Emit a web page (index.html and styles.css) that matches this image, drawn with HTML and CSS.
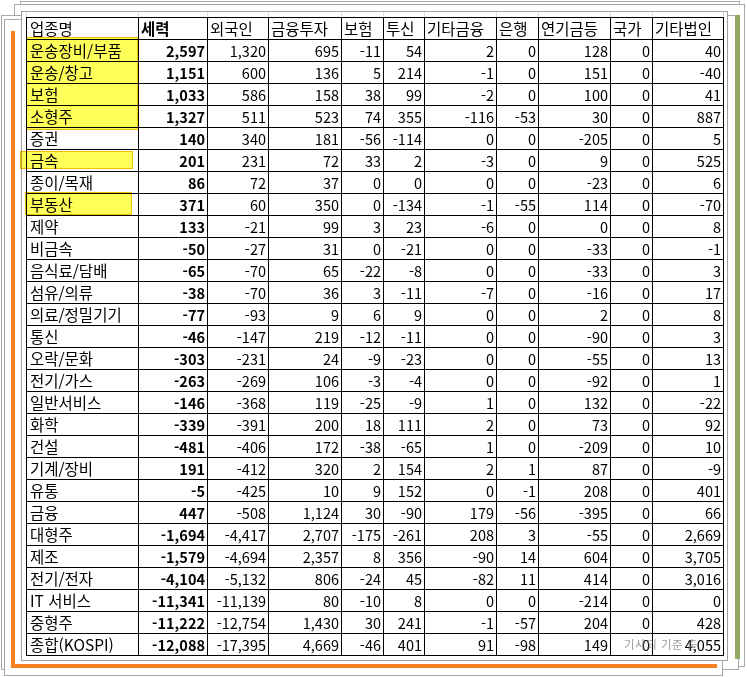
FILE: index.html
```html
<!DOCTYPE html>
<html lang="ko">
<head>
<meta charset="utf-8">
<title>업종별 수급</title>
<link rel="stylesheet" href="styles.css">
</head>
<body>
<div class="stage">
  <div class="sheet sheet-a"></div>
  <div class="sheet sheet-b"></div>
  <div class="sheet sheet-c"></div>
  <div class="sheet sheet-d"></div>
  <div class="sheet sheet-orange"></div>
  <div class="green-strip"></div>

  <div class="window">
    <table class="grid">
      <colgroup>
        <col class="c-name"><col class="c-power"><col class="c-foreign"><col class="c-invest"><col class="c-ins"><col class="c-trust"><col class="c-etcfin"><col class="c-bank"><col class="c-pension"><col class="c-nation"><col class="c-etccorp">
      </colgroup>
      <tr class="gap"><td></td><td></td><td></td><td></td><td></td><td></td><td></td><td></td><td></td><td></td><td></td></tr>
      <tr class="head"><td>업종명</td><td class="b">세력</td><td>외국인</td><td>금융투자</td><td>보험</td><td>투신</td><td>기타금융</td><td>은행</td><td>연기금등</td><td>국가</td><td>기타법인</td></tr>
      <tr><td>운송장비/부품</td><td class="b">2,597</td><td>1,320</td><td>695</td><td>-11</td><td>54</td><td>2</td><td>0</td><td>128</td><td>0</td><td>40</td></tr>
      <tr><td>운송/창고</td><td class="b">1,151</td><td>600</td><td>136</td><td>5</td><td>214</td><td>-1</td><td>0</td><td>151</td><td>0</td><td>-40</td></tr>
      <tr><td>보험</td><td class="b">1,033</td><td>586</td><td>158</td><td>38</td><td>99</td><td>-2</td><td>0</td><td>100</td><td>0</td><td>41</td></tr>
      <tr><td>소형주</td><td class="b">1,327</td><td>511</td><td>523</td><td>74</td><td>355</td><td>-116</td><td>-53</td><td>30</td><td>0</td><td>887</td></tr>
      <tr><td>증권</td><td class="b">140</td><td>340</td><td>181</td><td>-56</td><td>-114</td><td>0</td><td>0</td><td>-205</td><td>0</td><td>5</td></tr>
      <tr><td>금속</td><td class="b">201</td><td>231</td><td>72</td><td>33</td><td>2</td><td>-3</td><td>0</td><td>9</td><td>0</td><td>525</td></tr>
      <tr><td>종이/목재</td><td class="b">86</td><td>72</td><td>37</td><td>0</td><td>0</td><td>0</td><td>0</td><td>-23</td><td>0</td><td>6</td></tr>
      <tr><td>부동산</td><td class="b">371</td><td>60</td><td>350</td><td>0</td><td>-134</td><td>-1</td><td>-55</td><td>114</td><td>0</td><td>-70</td></tr>
      <tr><td>제약</td><td class="b">133</td><td>-21</td><td>99</td><td>3</td><td>23</td><td>-6</td><td>0</td><td>0</td><td>0</td><td>8</td></tr>
      <tr><td>비금속</td><td class="b">-50</td><td>-27</td><td>31</td><td>0</td><td>-21</td><td>0</td><td>0</td><td>-33</td><td>0</td><td>-1</td></tr>
      <tr><td>음식료/담배</td><td class="b">-65</td><td>-70</td><td>65</td><td>-22</td><td>-8</td><td>0</td><td>0</td><td>-33</td><td>0</td><td>3</td></tr>
      <tr><td>섬유/의류</td><td class="b">-38</td><td>-70</td><td>36</td><td>3</td><td>-11</td><td>-7</td><td>0</td><td>-16</td><td>0</td><td>17</td></tr>
      <tr><td>의료/정밀기기</td><td class="b">-77</td><td>-93</td><td>9</td><td>6</td><td>9</td><td>0</td><td>0</td><td>2</td><td>0</td><td>8</td></tr>
      <tr><td>통신</td><td class="b">-46</td><td>-147</td><td>219</td><td>-12</td><td>-11</td><td>0</td><td>0</td><td>-90</td><td>0</td><td>3</td></tr>
      <tr><td>오락/문화</td><td class="b">-303</td><td>-231</td><td>24</td><td>-9</td><td>-23</td><td>0</td><td>0</td><td>-55</td><td>0</td><td>13</td></tr>
      <tr><td>전기/가스</td><td class="b">-263</td><td>-269</td><td>106</td><td>-3</td><td>-4</td><td>0</td><td>0</td><td>-92</td><td>0</td><td>1</td></tr>
      <tr><td>일반서비스</td><td class="b">-146</td><td>-368</td><td>119</td><td>-25</td><td>-9</td><td>1</td><td>0</td><td>132</td><td>0</td><td>-22</td></tr>
      <tr><td>화학</td><td class="b">-339</td><td>-391</td><td>200</td><td>18</td><td>111</td><td>2</td><td>0</td><td>73</td><td>0</td><td>92</td></tr>
      <tr><td>건설</td><td class="b">-481</td><td>-406</td><td>172</td><td>-38</td><td>-65</td><td>1</td><td>0</td><td>-209</td><td>0</td><td>10</td></tr>
      <tr><td>기계/장비</td><td class="b">191</td><td>-412</td><td>320</td><td>2</td><td>154</td><td>2</td><td>1</td><td>87</td><td>0</td><td>-9</td></tr>
      <tr><td>유통</td><td class="b">-5</td><td>-425</td><td>10</td><td>9</td><td>152</td><td>0</td><td>-1</td><td>208</td><td>0</td><td>401</td></tr>
      <tr><td>금융</td><td class="b">447</td><td>-508</td><td>1,124</td><td>30</td><td>-90</td><td>179</td><td>-56</td><td>-395</td><td>0</td><td>66</td></tr>
      <tr><td>대형주</td><td class="b">-1,694</td><td>-4,417</td><td>2,707</td><td>-175</td><td>-261</td><td>208</td><td>3</td><td>-55</td><td>0</td><td>2,669</td></tr>
      <tr><td>제조</td><td class="b">-1,579</td><td>-4,694</td><td>2,357</td><td>8</td><td>356</td><td>-90</td><td>14</td><td>604</td><td>0</td><td>3,705</td></tr>
      <tr><td>전기/전자</td><td class="b">-4,104</td><td>-5,132</td><td>806</td><td>-24</td><td>45</td><td>-82</td><td>11</td><td>414</td><td>0</td><td>3,016</td></tr>
      <tr><td>IT 서비스</td><td class="b">-11,341</td><td>-11,139</td><td>80</td><td>-10</td><td>8</td><td>0</td><td>0</td><td>-214</td><td>0</td><td>0</td></tr>
      <tr><td>중형주</td><td class="b">-11,222</td><td>-12,754</td><td>1,430</td><td>30</td><td>241</td><td>-1</td><td>-57</td><td>204</td><td>0</td><td>428</td></tr>
      <tr><td>종합(KOSPI)</td><td class="b">-12,088</td><td>-17,395</td><td>4,669</td><td>-46</td><td>401</td><td>91</td><td>-98</td><td>149</td><td>0</td><td>4,055</td></tr>
    </table>
  </div>

  <div class="mark mark-top"></div>
  <div class="mark mark-metal"></div>
  <div class="mark mark-estate"></div>
  <div class="watermark">기사의 기준 출</div>
</div>
</body>
</html>
```

FILE: styles.css
```css
html, body {
  margin: 0;
  padding: 0;
  background: #ffffff;
}

.stage {
  position: relative;
  width: 747px;
  height: 677px;
  overflow: hidden;
  font-family: "Noto Sans CJK KR", "Noto Sans", sans-serif;
  color: #000;
}

/* stacked paper sheets behind the table window */
.sheet {
  position: absolute;
  background: #fff;
  border: 1px solid #a8a8a8;
  box-sizing: border-box;
}
.sheet-a { left: 20px; top: 1px; width: 720px; height: 660px; }
.sheet-b { left: 14px; top: 4px; width: 731px; height: 663px; }
.sheet-c { left: 1px; top: 15px; width: 738px; height: 655px; }
.sheet-d { left: 4px; top: 19px; width: 719px; height: 657px; }
.sheet-orange {
  left: 11px;
  top: 31px;
  width: 706px;
  height: 637px;
  border: none;
  border-left: 4px solid #f5821f;
  border-bottom: 4px solid #f5821f;
}
.green-strip {
  position: absolute;
  left: 735px;
  top: 15px;
  width: 5px;
  height: 644px;
  background: #8fa866;
}

.window {
  position: relative;
  margin: 11px 0 0 21px;
  width: 707px;
  height: 650px;
  box-sizing: border-box;
  border: 1px solid #a0a0a0;
  background: #fff;
  padding: 0 0 0 4px;
}

.grid {
  border-collapse: collapse;
  table-layout: fixed;
  width: 698px;
  font-size: 14.5px;
}
.c-name { width: 112px; }
.c-power { width: 69px; }
.c-foreign { width: 61px; }
.c-invest { width: 73px; }
.c-ins { width: 42px; }
.c-trust { width: 41px; }
.c-etcfin { width: 72px; }
.c-bank { width: 42px; }
.c-pension { width: 72px; }
.c-nation { width: 42px; }
.c-etccorp { width: 71px; }

.grid td {
  border: 1px solid #000;
  height: 21px;
  padding: 0 2px 0 2px;
  line-height: 21px;
  text-align: right;
  white-space: nowrap;
  overflow: hidden;
}
.grid td:first-child {
  text-align: left;
  padding-left: 3px;
  font-size: 15.5px;
}
.grid .b { font-weight: 700; }

.grid tr.gap td {
  height: 5px;
  line-height: 5px;
  padding: 0;
  border-top: none;
  border-left: 1px solid #dcdcdc;
  border-right: 1px solid #dcdcdc;
  border-bottom: 1px solid #000;
}
.grid tr.head td {
  text-align: left;
  font-size: 15.5px;
}

/* highlighter marks */
.mark {
  position: absolute;
  background: #ffff5a;
  border: 1px solid #f0c000;
  box-sizing: border-box;
  mix-blend-mode: multiply;
}
.mark-top { left: 26px; top: 37px; width: 112px; height: 93px; }
.mark-metal { left: 20px; top: 151px; width: 113px; height: 18px; }
.mark-estate { left: 25px; top: 192px; width: 107px; height: 23px; }

.watermark {
  position: absolute;
  left: 624px;
  top: 636px;
  font-size: 11.5px;
  color: rgba(110, 110, 110, 0.7);
  filter: blur(0.7px);
  letter-spacing: 0.5px;
}
```
